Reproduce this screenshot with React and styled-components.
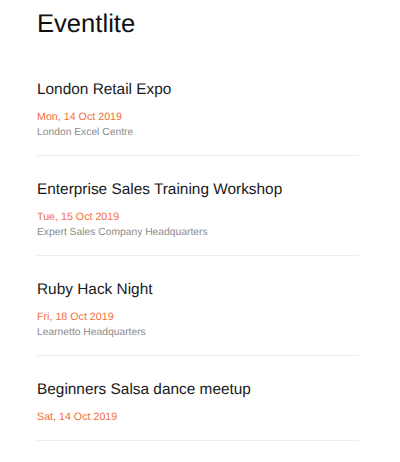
import styled, { createGlobalStyle } from 'styled-components';

const GlobalStyle = createGlobalStyle`
  body {
    margin: 0;
    background: #fff;
    font-family: "Liberation Sans", Arial, sans-serif;
    text-rendering: geometricPrecision;
  }
`

const Page = styled.div`
  padding: 9px 41px 0 37px;
`

const Title = styled.h1`
  margin: 0 0 17px;
  font-size: 25.6px;
  line-height: 30px;
  font-weight: 400;
  color: #111;
`

const List = styled.div`
  display: flex;
  flex-direction: column;
`

const Card = styled.div`
  padding: 24px 0 15px;
  border-bottom: 1px solid #ededed;
`

const Name = styled.h2`
  margin: 0 0 10px;
  font-size: 15.4px;
  line-height: 20px;
  font-weight: 400;
  color: #1a1a1a;
`

const Meta = styled.div`
  font-size: ${props => props.accent ? '10.7px' : '10.3px'};
  line-height: 15px;
  color: ${props => props.accent ? '#f36f3f' : '#8c8c8c'};
`

const events = [
  { name: 'London Retail Expo', date: 'Mon, 14 Oct 2019', venue: 'London Excel Centre' },
  { name: 'Enterprise Sales Training Workshop', date: 'Tue, 15 Oct 2019', venue: 'Expert Sales Company Headquarters' },
  { name: 'Ruby Hack Night', date: 'Fri, 18 Oct 2019', venue: 'Learnetto Headquarters' },
  { name: 'Beginners Salsa dance meetup', date: 'Sat, 14 Oct 2019' },
]

const App = () => {
  return (
    <Page>
      <GlobalStyle />
      <Title>Eventlite</Title>
      <List>
        {events.map(ev => (
          <Card key={ev.name}>
            <Name>{ev.name}</Name>
            <Meta accent>{ev.date}</Meta>
            {ev.venue && <Meta>{ev.venue}</Meta>}
          </Card>
        ))}
      </List>
    </Page>
  )
}

export default App
